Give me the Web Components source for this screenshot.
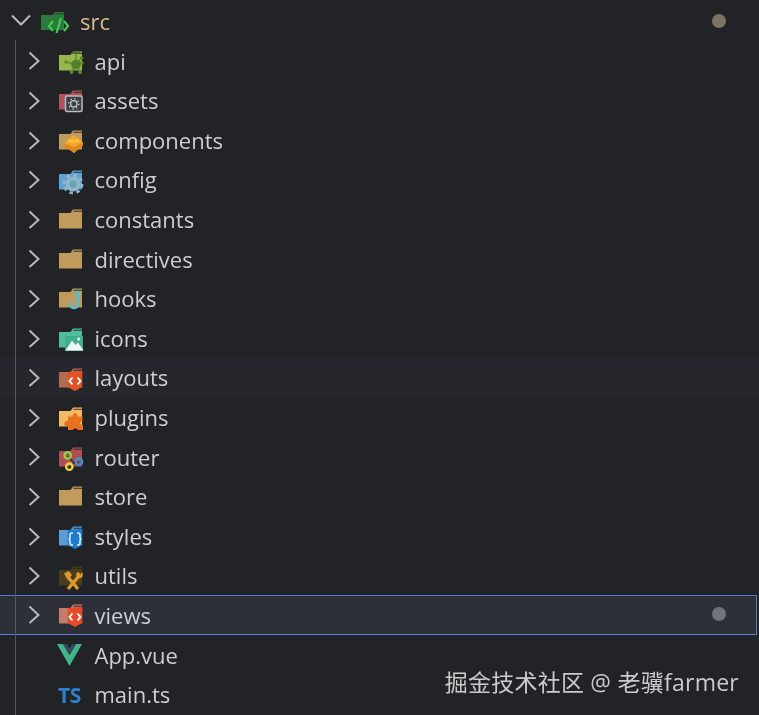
<!DOCTYPE html>
<html lang="zh">
<head>
<meta charset="utf-8">
<title>src</title>
<style>
  html, body { margin: 0; background: #212327; }
  body { width: 759px; height: 715px; overflow: hidden; }
</style>
</head>
<body>
<file-tree>
  <tree-row label="src" icon="src" open dot="#7d7367" tone="src"></tree-row>
  <tree-row label="api" icon="api" nested></tree-row>
  <tree-row label="assets" icon="assets" nested></tree-row>
  <tree-row label="components" icon="components" nested></tree-row>
  <tree-row label="config" icon="config" nested></tree-row>
  <tree-row label="constants" icon="plain" nested></tree-row>
  <tree-row label="directives" icon="plain" nested></tree-row>
  <tree-row label="hooks" icon="hooks" nested></tree-row>
  <tree-row label="icons" icon="icons" nested></tree-row>
  <tree-row label="layouts" icon="layouts" nested hover></tree-row>
  <tree-row label="plugins" icon="plugins" nested></tree-row>
  <tree-row label="router" icon="router" nested></tree-row>
  <tree-row label="store" icon="plain" nested></tree-row>
  <tree-row label="styles" icon="styles" nested></tree-row>
  <tree-row label="utils" icon="utils" nested></tree-row>
  <tree-row label="views" icon="views" nested selected dot="#70737e"></tree-row>
  <tree-row label="App.vue" icon="vue" nested file></tree-row>
  <tree-row label="main.ts" icon="ts" nested file></tree-row>
  <water-mark slot="mark">掘金技术社区 @ 老骥farmer</water-mark>
</file-tree>

<script>
function folder(color, slit) {
    return `<path d="M1 13H12.500L15 9.500H24V28.500H1Z" fill="${color}"/>
      <path d="M15.500 11.300H24" stroke="${slit || '#212327'}" stroke-width="1.200" opacity=".75"/>`;
}

function shield(color) {
    return `<path d="M9.700 13L24.300 12V28L17 32L9.700 28Z" fill="${color}"/>`;
}

const codeMark = `<path d="M14.500 18.500L11.500 22L14.500 25.500M19.500 18.500L22.500 22L19.500 25.500" fill="none" stroke="#fff" stroke-width="1.900"/>`;

const ICONS = {
    plain: folder("#c09b5b"),
    src: `<path d="M0 13H11.500L14 10H23V28H0Z" fill="#2d7a3c"/>
      <path d="M14.500 11.800H23" stroke="#1d4a26" stroke-width="1.200"/>
      <path d="M12 19L8 24L12 29M23 19L27 24L23 29M20 16L15.500 31" fill="none" stroke="#3ecb4e" stroke-width="2.200"/>`,
    api: `${folder("#9ab54e")}
      <path d="M18 22.500L8 20M18 22.500L23.500 16M18 22.500L24 21M18 22.500L22 30M18 22.500L13.500 30M18 22.500V11" stroke="#5f8a2d" stroke-width="1.500"/>
      <path d="M14 11H22" stroke="#4c6e24" stroke-width="1.800"/>
      <circle cx="18" cy="22.500" r="4.800" fill="#557f28"/>
      <circle cx="8" cy="20" r="1.800" fill="#5f8a2d"/>
      <circle cx="13.500" cy="30" r="1.900" fill="#5f8a2d"/>
      <circle cx="24" cy="21" r="1.800" fill="#5f8a2d"/>
      <circle cx="23.500" cy="16" r="1.800" fill="#5f8a2d"/>
      <circle cx="22" cy="30" r="2" fill="#5f8a2d"/>`,
    assets: `${folder("#b4525b")}
      <rect x="7.500" y="15" width="16.500" height="15.500" rx="1.500" fill="#3c3f44" stroke="#b9bcbf" stroke-width="1.500"/>
      <circle cx="15.800" cy="22.800" r="3.200" fill="none" stroke="#c9cbce" stroke-width="1.300"/>
      <circle cx="15.800" cy="22.800" r="5" fill="none" stroke="#c9cbce" stroke-width="1.300" stroke-dasharray="1.400 2.500"/>`,
    components: `${folder("#c09b5b")}
      <path d="M16 14L25 21.500L16 32L6 22Z" fill="#f5a82a"/>
      <path d="M6 22L16 26L25 21.500V24.500L16 32L6 25Z" fill="#e08a1c"/>
      <ellipse cx="13" cy="20" rx="3" ry="1.600" fill="#ffc244"/>
      <ellipse cx="18.500" cy="19.500" rx="3" ry="1.600" fill="#ffc244"/>`,
    config: `${folder("#5da2d3")}
      <circle cx="15" cy="23" r="7.500" fill="#8fb6c9"/>
      <circle cx="15" cy="23" r="9" fill="none" stroke="#8fb6c9" stroke-width="2.800" stroke-dasharray="3.500 3.570"/>
      <circle cx="15" cy="23" r="3.700" fill="#68a5b8"/>`,
    hooks: `${folder("#c09b5b")}
      <circle cx="19.700" cy="15" r="2.300" fill="none" stroke="#4fc0e0" stroke-width="1.600"/>
      <path d="M19.700 17.500V25C19.700 30.500 12.200 30.500 12.200 25.500V22.500" fill="none" stroke="#4fc0e0" stroke-width="2.200"/>`,
    icons: `${folder("#4fbe9a")}
      <rect x="7" y="17" width="18" height="15" fill="#3fae8c"/>
      <path d="M7.500 31.500L14 21.500L17.500 26L20 23.500L25.500 31.500Z" fill="#eef8f4"/>
      <circle cx="20.700" cy="20" r="1.600" fill="#eef8f4"/>`,
    layouts: `${folder("#b56a53")}${shield("#df5228")}${codeMark}`,
    plugins: `${folder("#f5b962")}
      <path d="M10 18.500H14.500C14 14 20 14 19.500 18.500H24.500V23C21.500 22.500 21.500 27.500 25 27V32H19.500C20 30 15 30 15 32H10V28C5 29 5 22 10 23Z" fill="#e8711d"/>`,
    router: `${folder("#af4f55")}
      <path d="M10 18L16 25L21 24M16 25L11.500 29" fill="none" stroke="#33363b" stroke-width="1.600"/>
      <circle cx="9.700" cy="17.400" r="3.200" fill="none" stroke="#8fd13f" stroke-width="2.300"/>
      <circle cx="21" cy="23.700" r="3.200" fill="none" stroke="#3f8fd8" stroke-width="2.300"/>
      <circle cx="11.300" cy="28.700" r="3.200" fill="none" stroke="#ecd53f" stroke-width="2.300"/>`,
    styles: `${folder("#5c9cd4")}${shield("#1f7ccc")}
      <path d="M15 16H14Q12 16 12 18V20.500Q12 22 10.500 22Q12 22 12 23.500V26Q12 28 14 28H15M19 16H20Q22 16 22 18V20.500Q22 22 23.500 22Q22 22 22 23.500V26Q22 28 20 28H19" fill="none" stroke="#cfeaff" stroke-width="1.700"/>`,
    utils: `${folder("#4a3d1d", "#2a2518")}
      <path d="M10 32L21 19M20 32L9 19" stroke="#dc9a2c" stroke-width="3.400"/>
      <path d="M6 16.500L11 14L14 18.500L9.500 22Z" fill="#dc9a2c"/>
      <circle cx="21.500" cy="18" r="3.300" fill="#dc9a2c"/>
      <path d="M20.500 14.500L23.500 13.500L22.500 18Z" fill="#4a3d1d"/>`,
    views: `${folder("#c47d68")}${shield("#e84a2a")}${codeMark}`,
    vue: `<path d="M-1 8H5L11.500 19L18 8H24L11.500 30Z" fill="#42b38a"/>
      <path d="M5 8H9L11.500 12.500L14 8H18L11.500 19Z" fill="#35495e"/>`
};

class FileTree extends HTMLElement {
    constructor() {
        super();
        this.shadow = this.attachShadow({mode: 'open'});
    }

    connectedCallback() {
        this.shadow.innerHTML = `
        <style>
            :host { display: block; position: relative; width: 759px; height: 715px; padding-top: 2px; box-sizing: border-box; filter: blur(.3px); }
            .guide { position: absolute; left: 15px; top: 40px; bottom: 0; width: 1px; background: #54575d; z-index: 1; }
        </style>
        <div class="guide"></div>
        <slot></slot>
        <slot name="mark"></slot>
        `;
    }
}

class TreeRow extends HTMLElement {
    constructor() {
        super();
        this.shadow = this.attachShadow({mode: 'open'});
    }

    connectedCallback() {
        const open = this.hasAttribute("open");
        const dot = this.getAttribute("dot");
        const icon = this.getAttribute("icon");
        let glyph = `<svg class="icon" width="28" height="39" viewBox="0 0 28 39">${ICONS[icon]}</svg>`;
        if (icon === "ts") {
            glyph = `<span class="ts">TS</span>`;
        }
        this.shadow.innerHTML = `
        <style>
            :host {
                display: flex; align-items: center; box-sizing: border-box; height: 39.6px;
                font: 22px "Open Sans", "Noto Sans", sans-serif; color: #cbced2;
            }
            :host([nested]) { padding-left: 26px; }
            :host([hover]) { background: #25272c; }
            :host([selected]) {
                width: 757px; background: #2d3039; margin: -1px 0 1px;
                border-top: 1px solid #5b7cc8; border-bottom: 1px solid #5b7cc8; border-right: 1px solid #5b7cc8;
            }
            :host([tone="src"]) { color: #dcbb8d; padding-left: 10px; }
            .arrow { flex: none; width: 16px; height: 20px; margin-right: 16px; }
            :host([open]) .arrow { width: 22px; margin-right: 9px; }
            .slot-icon { flex: none; width: 28px; height: 39px; margin-right: 8.5px; position: relative; }
            :host([tone="src"]) .slot-icon { margin-right: 11px; }
            .icon { display: block; overflow: visible; }
            .ts {
                position: absolute; left: 0; top: 6px; font: bold 21px "Open Sans", sans-serif;
                color: #2f7fd0; letter-spacing: -.5px;
            }
            .label { flex: 1; margin-top: -1.5px; white-space: nowrap; }
            :host([selected]) .label { margin-top: .5px; }
            .dot { flex: none; width: 14px; height: 14px; border-radius: 50%; margin-right: 33px; margin-top: -2px; }
            :host([selected]) .dot { margin-right: 30px; }
        </style>
        ${this.hasAttribute("file") ? `<span class="arrow"></span>` : `
        <svg class="arrow" viewBox="${open ? '0 0 22 20' : '0 0 16 20'}">
            <path d="${open ? 'M2 3.500L11 12.500L20 3.500' : 'M3.500 1.500L12.500 10L3.500 18'}" fill="none" stroke="#b6b9bd" stroke-width="2"/>
        </svg>`}
        <span class="slot-icon">${glyph}</span>
        <span class="label">${this.getAttribute("label")}</span>
        ${dot ? `<span class="dot" style="background:${dot}"></span>` : ""}
        `;
    }
}

class WaterMark extends HTMLElement {
    constructor() {
        super();
        this.shadow = this.attachShadow({mode: 'open'});
    }

    connectedCallback() {
        this.shadow.innerHTML = `
        <style>
            :host {
                position: absolute; right: 20px; bottom: 17px; z-index: 2; white-space: nowrap;
                font: 23px "Open Sans", "Noto Sans CJK SC", sans-serif; color: #cbcbcb; letter-spacing: .25px;
            }
        </style>
        <slot></slot>
        `;
    }
}

customElements.define('file-tree', FileTree);
customElements.define('tree-row', TreeRow);
customElements.define('water-mark', WaterMark);
</script>
</body>
</html>
